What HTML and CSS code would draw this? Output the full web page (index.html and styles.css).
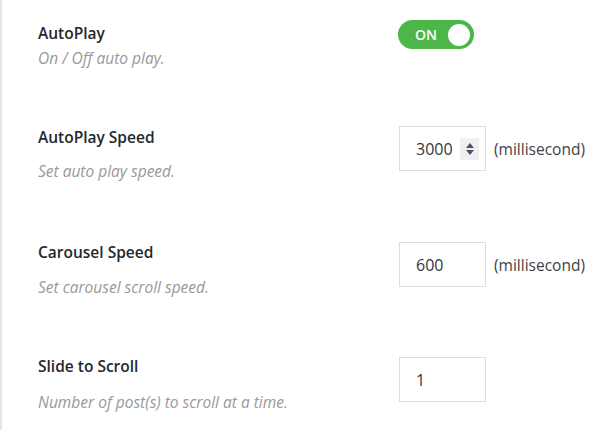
FILE: index.html
```html
<!DOCTYPE html>
<html>
<head>
<meta charset="utf-8">
<link rel="stylesheet" href="styles.css">
</head>
<body>
<div class="panel">
  <div class="row row-1">
    <div class="info">
      <div class="label">AutoPlay</div>
      <div class="desc">On / Off auto play.</div>
    </div>
    <div class="control">
      <div class="toggle"><span class="toggle-text">ON</span><span class="knob"></span></div>
    </div>
  </div>
  <div class="row row-2">
    <div class="info">
      <div class="label">AutoPlay Speed</div>
      <div class="desc">Set auto play speed.</div>
    </div>
    <div class="control">
      <div class="field"><span class="value">3000</span><span class="spin"><svg width="10" height="16" viewBox="0 0 10 16"><path d="M5 2 L9 7 L1 7 Z" fill="#5b4a6b"/><path d="M1 9 L9 9 L5 14 Z" fill="#5b4a6b"/></svg></span></div>
      <span class="unit">(millisecond)</span>
    </div>
  </div>
  <div class="row row-3">
    <div class="info">
      <div class="label">Carousel Speed</div>
      <div class="desc">Set carousel scroll speed.</div>
    </div>
    <div class="control">
      <div class="field"><span class="value">600</span></div>
      <span class="unit">(millisecond)</span>
    </div>
  </div>
  <div class="row row-4">
    <div class="info">
      <div class="label">Slide to Scroll</div>
      <div class="desc">Number of post(s) to scroll at a time.</div>
    </div>
    <div class="control">
      <div class="field"><span class="value">1</span></div>
    </div>
  </div>
</div>
</body>
</html>
```
FILE: styles.css
```css
html, body {
  margin: 0;
  padding: 0;
  background: #ffffff;
}
body {
  font-family: "Open Sans", "Noto Sans", sans-serif;
  color: #23282d;
}
.panel {
  border-left: 2px solid #e5e5e5;
  height: 430px;
  box-sizing: border-box;
  padding: 20px 0 0 36px;
}
.row {
  display: flex;
  align-items: flex-start;
}
.info {
  width: 361px;
  flex: none;
}
.label {
  font-size: 15.5px;
  font-weight: 600;
  line-height: 20px;
  color: #23282d;
}
.desc {
  font-size: 15.5px;
  font-style: italic;
  line-height: 20px;
  color: #999999;
}
.row-1 .label { margin-top: 3px; }
.row-1 .desc { margin-top: 5px; }
.row-2 { margin-top: 58px; }
.row-2 .label { margin-top: 1px; }
.row-2 .desc { margin-top: 14px; }
.row-3 { margin-top: 61px; }
.row-3 .label { margin-top: 0px; }
.row-3 .desc { margin-top: 15px; }
.row-4 { margin-top: 60px; }
.row-4 .label { margin-top: -1px; }
.row-4 .desc { margin-top: 16px; }

.control {
  display: flex;
  align-items: center;
  gap: 8px;
}
.toggle {
  width: 76px;
  height: 29px;
  border-radius: 15px;
  background: #4cb748;
  display: flex;
  align-items: center;
  justify-content: space-between;
  padding: 0 4px 0 17px;
  box-sizing: border-box;
  margin-left: -1px;
}
.toggle-text {
  color: #ffffff;
  font-size: 14px;
  font-weight: 600;
  line-height: 29px;
}
.knob {
  width: 22px;
  height: 22px;
  border-radius: 50%;
  background: #ffffff;
}
.field {
  width: 87px;
  height: 45px;
  box-sizing: border-box;
  border: 1px solid #dddddd;
  display: flex;
  align-items: center;
  padding-left: 16px;
  padding-right: 6px;
  justify-content: space-between;
}
.value {
  font-size: 16px;
  color: #32373c;
}
.spin {
  width: 19px;
  height: 22px;
  background: #f0f0f0;
  display: flex;
  align-items: center;
  justify-content: center;
}
.spin svg { display: block; }
.unit {
  font-size: 15.5px;
  color: #3c434a;
}
```
